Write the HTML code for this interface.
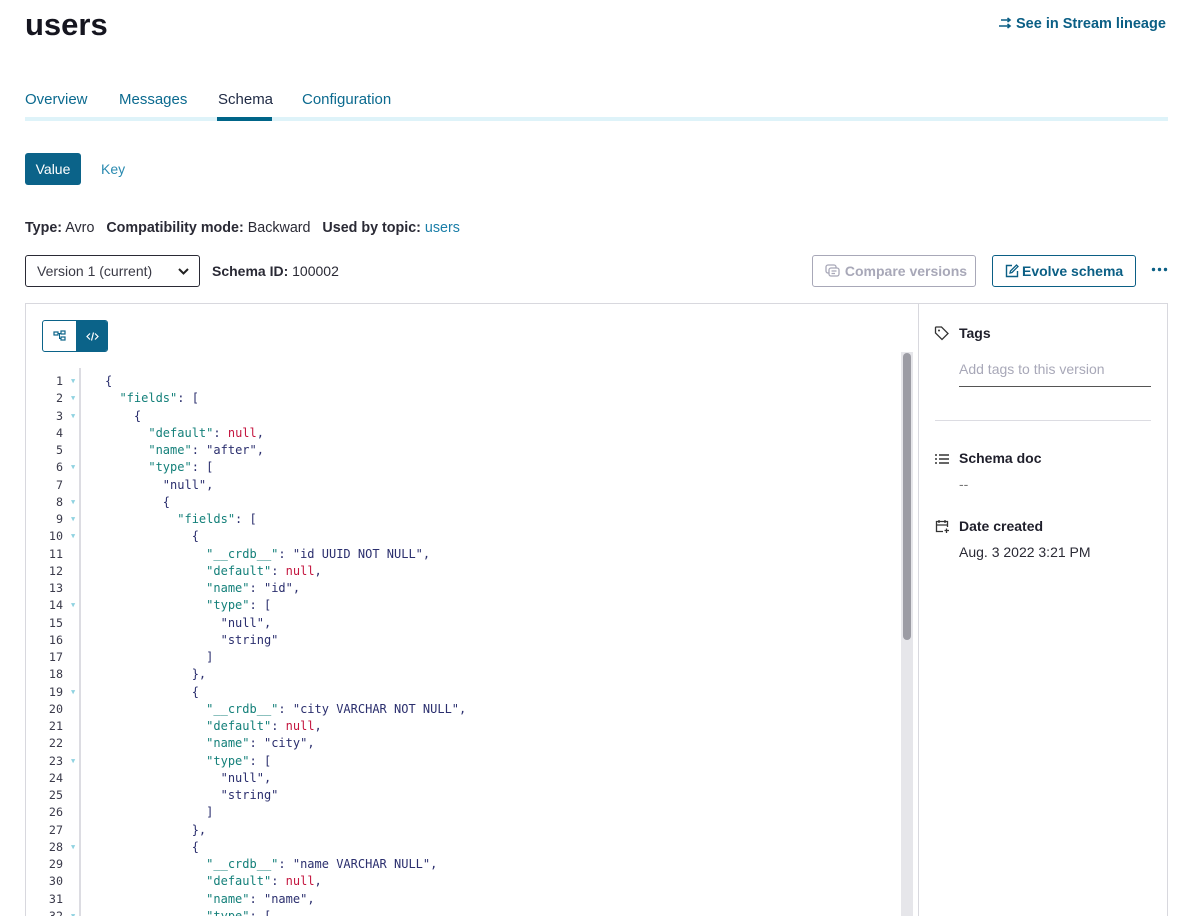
<!DOCTYPE html>
<html style="width:1189px;height:916px;overflow:hidden"><head><meta charset="utf-8"><style>
*{box-sizing:border-box;margin:0;padding:0}
body{width:1189px;height:916px;overflow:hidden;background:#fff;font-family:"Liberation Sans",sans-serif;color:#1f1f2b;position:relative}
.a{position:absolute}
.tab{position:absolute;top:91px;font-size:15px;color:#0b6a8f}
.code{position:absolute;left:26px;top:373px;font-family:"DejaVu Sans Mono","Liberation Mono",monospace;font-size:12px;line-height:17.25px}
.ln{position:absolute;left:0;width:37px;text-align:right;color:#3a3a4a;font-size:11.7px}
.ar{position:absolute;left:45px;color:#8fd2e0;font-size:7px}
.tx{position:absolute;left:79px;white-space:pre;color:#2b2f6e}
.k{color:#14807a}.n{color:#c4163f}
.lab{position:absolute;left:934px;font-size:14px;font-weight:bold;color:#1f1f2b}
.lab svg{vertical-align:-3px;margin-right:9px}
</style></head><body>
<div class="a" style="left:25px;top:7px;font-size:31px;font-weight:bold;color:#15151f">users</div>
<div class="a" style="left:998px;top:16px;font-size:14.5px;font-weight:bold;color:#0b5f85">
<svg width="14" height="12" viewBox="0 0 14 12" style="vertical-align:-1px;margin-right:4px"><path d="M3 3H12M9.5 1L12 3 9.5 5M1 9H12M9.5 7L12 9 9.5 11" stroke="#0b5f85" stroke-width="1.6" fill="none"/></svg>See in Stream lineage</div>
<div class="tab" style="left:25px">Overview</div>
<div class="tab" style="left:119px">Messages</div>
<div class="tab" style="left:218px;color:#1f2a44">Schema</div>
<div class="tab" style="left:302px">Configuration</div>
<div class="a" style="left:25px;top:117px;width:1143px;height:4px;background:#def3f9"></div>
<div class="a" style="left:217px;top:117px;width:55px;height:4px;background:#006588"></div>
<div class="a" style="left:25px;top:153px;width:56px;height:32px;background:#0b6389;border-radius:3px;color:#fff;font-size:14px;text-align:center;line-height:32px">Value</div>
<div class="a" style="left:101px;top:161px;font-size:14px;color:#2a8ab0">Key</div>
<div class="a" style="left:25px;top:220px;font-size:14.3px;color:#2a2a35"><b>Type:</b> Avro &nbsp; <b>Compatibility mode:</b> Backward &nbsp; <b>Used by topic:</b> <span style="color:#1a7ea8">users</span></div>
<div class="a" style="left:25px;top:255px;width:175px;height:32px;border:1px solid #2a2a35;border-radius:3px;font-size:14px;color:#3a3a45;padding:7px 0 0 11px">Version 1 (current)
<svg class="a" style="left:152px;top:12px" width="11" height="7" viewBox="0 0 11 7"><path d="M1 1L5.5 5.5 10 1" stroke="#222" stroke-width="2" fill="none"/></svg></div>
<div class="a" style="left:212px;top:263px;font-size:14px;color:#2a2a35"><b>Schema ID:</b> 100002</div>
<div class="a" style="left:812px;top:255px;width:164px;height:32px;border:1px solid #a8a8b8;border-radius:3px;font-size:14px;font-weight:bold;color:#a8a8b8;padding:7px 0 0 12px">
<svg width="16" height="14" viewBox="0 0 16 14" style="vertical-align:-2px"><rect x="1" y="1" width="10" height="8" rx="2" fill="none" stroke="#a8a8b8" stroke-width="1.3"/><rect x="4" y="4" width="10" height="8" rx="2" fill="#fff" stroke="#a8a8b8" stroke-width="1.3"/><path d="M6.5 7H11.5M6.5 9.5H10" stroke="#a8a8b8" stroke-width="1.2"/></svg> Compare versions</div>
<div class="a" style="left:992px;top:255px;width:144px;height:32px;border:1px solid #0b5f85;border-radius:3px;font-size:14px;font-weight:bold;color:#0b5f85;padding:7px 0 0 12px">
<svg width="14" height="14" viewBox="0 0 14 14" style="vertical-align:-2px;margin-right:3px"><path d="M7 1.5H1.5V12.5H12.5V7" fill="none" stroke="#0b5f85" stroke-width="1.4"/><path d="M5 9L5.5 7 11.5 1 13 2.5 7 8.5Z" fill="none" stroke="#0b5f85" stroke-width="1.3"/></svg>Evolve schema</div>
<svg class="a" style="left:1151px;top:267px" width="18" height="5" viewBox="0 0 18 5"><circle cx="2.5" cy="2.5" r="1.7" fill="#0b5f85"/><circle cx="8.5" cy="2.5" r="1.7" fill="#0b5f85"/><circle cx="14.5" cy="2.5" r="1.7" fill="#0b5f85"/></svg>
<div class="a" style="left:25px;top:303px;width:1143px;height:640px;border:1px solid #d8d8de"></div>
<div class="a" style="left:918px;top:303px;width:1px;height:620px;background:#d8d8de"></div>
<div class="a" style="left:42px;top:320px;width:66px;height:32px;border:1px solid #0b6389;border-radius:3px;overflow:hidden">
<div class="a" style="left:33px;top:0;width:33px;height:32px;background:#0b6389"></div>
<svg class="a" style="left:10px;top:9px" width="13" height="12" viewBox="0 0 13 12"><rect x="1" y="2" width="4" height="3" fill="none" stroke="#0b6389" stroke-width="1.2"/><rect x="8" y="1" width="4" height="3" fill="none" stroke="#0b6389" stroke-width="1.2"/><rect x="8" y="7" width="4" height="3" fill="none" stroke="#0b6389" stroke-width="1.2"/><path d="M5 3.5H8M6.5 3.5V8.5H8" stroke="#0b6389" fill="none"/></svg>
<svg class="a" style="left:43px;top:10px" width="13" height="11" viewBox="0 0 13 11"><path d="M4 2.5L1 5.5 4 8.5M9 2.5L12 5.5 9 8.5M7.5 1.5L5.5 9.5" stroke="#fff" stroke-width="1.2" fill="none"/></svg>
</div>
<div class="a" style="left:79px;top:368px;width:2px;height:560px;background:#dcdce2"></div>
<div class="a" style="left:901px;top:352px;width:12px;height:570px;background:#e6e6ea"></div>
<div class="a" style="left:903px;top:353px;width:8px;height:287px;background:#9c9ca4;border-radius:4px"></div>
<div class="lab" style="top:325px">
<svg width="16" height="16" viewBox="0 0 16 16"><path d="M1.5 2.5V8L8 14.5 14 8.5 7.5 2H2Z" fill="none" stroke="#333" stroke-width="1.3"/><circle cx="5" cy="5.5" r="1" fill="#333"/></svg>Tags</div>
<div class="a" style="left:959px;top:361px;font-size:14px;color:#a8a8b8">Add tags to this version</div>
<div class="a" style="left:959px;top:386px;width:192px;height:1px;background:#555"></div>
<div class="a" style="left:935px;top:420px;width:216px;height:1px;background:#dcdce2"></div>
<div class="lab" style="top:450px">
<svg width="16" height="14" viewBox="0 0 16 14"><path d="M1 3H3M1 7H3M1 11H3M5 3H15M5 7H15M5 11H15" stroke="#333" stroke-width="1.5"/></svg>Schema doc</div>
<div class="a" style="left:959px;top:476px;font-size:14px;color:#777">--</div>
<div class="lab" style="top:518px">
<svg width="16" height="16" viewBox="0 0 16 16"><path d="M9 13.5H2.5V3.5H13.5V9M2.5 7H13.5M5 2V5M11 2V5M12.5 10.5V15M10.5 12.5H15" stroke="#333" stroke-width="1.3" fill="none"/></svg>Date created</div>
<div class="a" style="left:959px;top:544px;font-size:14px;color:#2a2a35">Aug. 3 2022 3:21 PM</div>
<div class="code">
<div class="ln" style="top:0">1</div><div class="ar" style="top:0">▼</div><div class="tx" style="top:0">{</div>
<div class="ln" style="top:17.25px">2</div><div class="ar" style="top:17.25px">▼</div><div class="tx" style="top:17.25px">  <span class="k">"fields"</span>: [</div>
<div class="ln" style="top:34.5px">3</div><div class="ar" style="top:34.5px">▼</div><div class="tx" style="top:34.5px">    {</div>
<div class="ln" style="top:51.75px">4</div><div class="tx" style="top:51.75px">      <span class="k">"default"</span>: <span class="n">null</span>,</div>
<div class="ln" style="top:69px">5</div><div class="tx" style="top:69px">      <span class="k">"name"</span>: "after",</div>
<div class="ln" style="top:86.25px">6</div><div class="ar" style="top:86.25px">▼</div><div class="tx" style="top:86.25px">      <span class="k">"type"</span>: [</div>
<div class="ln" style="top:103.5px">7</div><div class="tx" style="top:103.5px">        "null",</div>
<div class="ln" style="top:120.75px">8</div><div class="ar" style="top:120.75px">▼</div><div class="tx" style="top:120.75px">        {</div>
<div class="ln" style="top:138px">9</div><div class="ar" style="top:138px">▼</div><div class="tx" style="top:138px">          <span class="k">"fields"</span>: [</div>
<div class="ln" style="top:155.25px">10</div><div class="ar" style="top:155.25px">▼</div><div class="tx" style="top:155.25px">            {</div>
<div class="ln" style="top:172.5px">11</div><div class="tx" style="top:172.5px">              <span class="k">"__crdb__"</span>: "id UUID NOT NULL",</div>
<div class="ln" style="top:189.75px">12</div><div class="tx" style="top:189.75px">              <span class="k">"default"</span>: <span class="n">null</span>,</div>
<div class="ln" style="top:207px">13</div><div class="tx" style="top:207px">              <span class="k">"name"</span>: "id",</div>
<div class="ln" style="top:224.25px">14</div><div class="ar" style="top:224.25px">▼</div><div class="tx" style="top:224.25px">              <span class="k">"type"</span>: [</div>
<div class="ln" style="top:241.5px">15</div><div class="tx" style="top:241.5px">                "null",</div>
<div class="ln" style="top:258.75px">16</div><div class="tx" style="top:258.75px">                "string"</div>
<div class="ln" style="top:276px">17</div><div class="tx" style="top:276px">              ]</div>
<div class="ln" style="top:293.25px">18</div><div class="tx" style="top:293.25px">            },</div>
<div class="ln" style="top:310.5px">19</div><div class="ar" style="top:310.5px">▼</div><div class="tx" style="top:310.5px">            {</div>
<div class="ln" style="top:327.75px">20</div><div class="tx" style="top:327.75px">              <span class="k">"__crdb__"</span>: "city VARCHAR NOT NULL",</div>
<div class="ln" style="top:345px">21</div><div class="tx" style="top:345px">              <span class="k">"default"</span>: <span class="n">null</span>,</div>
<div class="ln" style="top:362.25px">22</div><div class="tx" style="top:362.25px">              <span class="k">"name"</span>: "city",</div>
<div class="ln" style="top:379.5px">23</div><div class="ar" style="top:379.5px">▼</div><div class="tx" style="top:379.5px">              <span class="k">"type"</span>: [</div>
<div class="ln" style="top:396.75px">24</div><div class="tx" style="top:396.75px">                "null",</div>
<div class="ln" style="top:414px">25</div><div class="tx" style="top:414px">                "string"</div>
<div class="ln" style="top:431.25px">26</div><div class="tx" style="top:431.25px">              ]</div>
<div class="ln" style="top:448.5px">27</div><div class="tx" style="top:448.5px">            },</div>
<div class="ln" style="top:465.75px">28</div><div class="ar" style="top:465.75px">▼</div><div class="tx" style="top:465.75px">            {</div>
<div class="ln" style="top:483px">29</div><div class="tx" style="top:483px">              <span class="k">"__crdb__"</span>: "name VARCHAR NULL",</div>
<div class="ln" style="top:500.25px">30</div><div class="tx" style="top:500.25px">              <span class="k">"default"</span>: <span class="n">null</span>,</div>
<div class="ln" style="top:517.5px">31</div><div class="tx" style="top:517.5px">              <span class="k">"name"</span>: "name",</div>
<div class="ln" style="top:534.75px">32</div><div class="ar" style="top:534.75px">▼</div><div class="tx" style="top:534.75px">              <span class="k">"type"</span>: [</div>
</div>
</body></html>
